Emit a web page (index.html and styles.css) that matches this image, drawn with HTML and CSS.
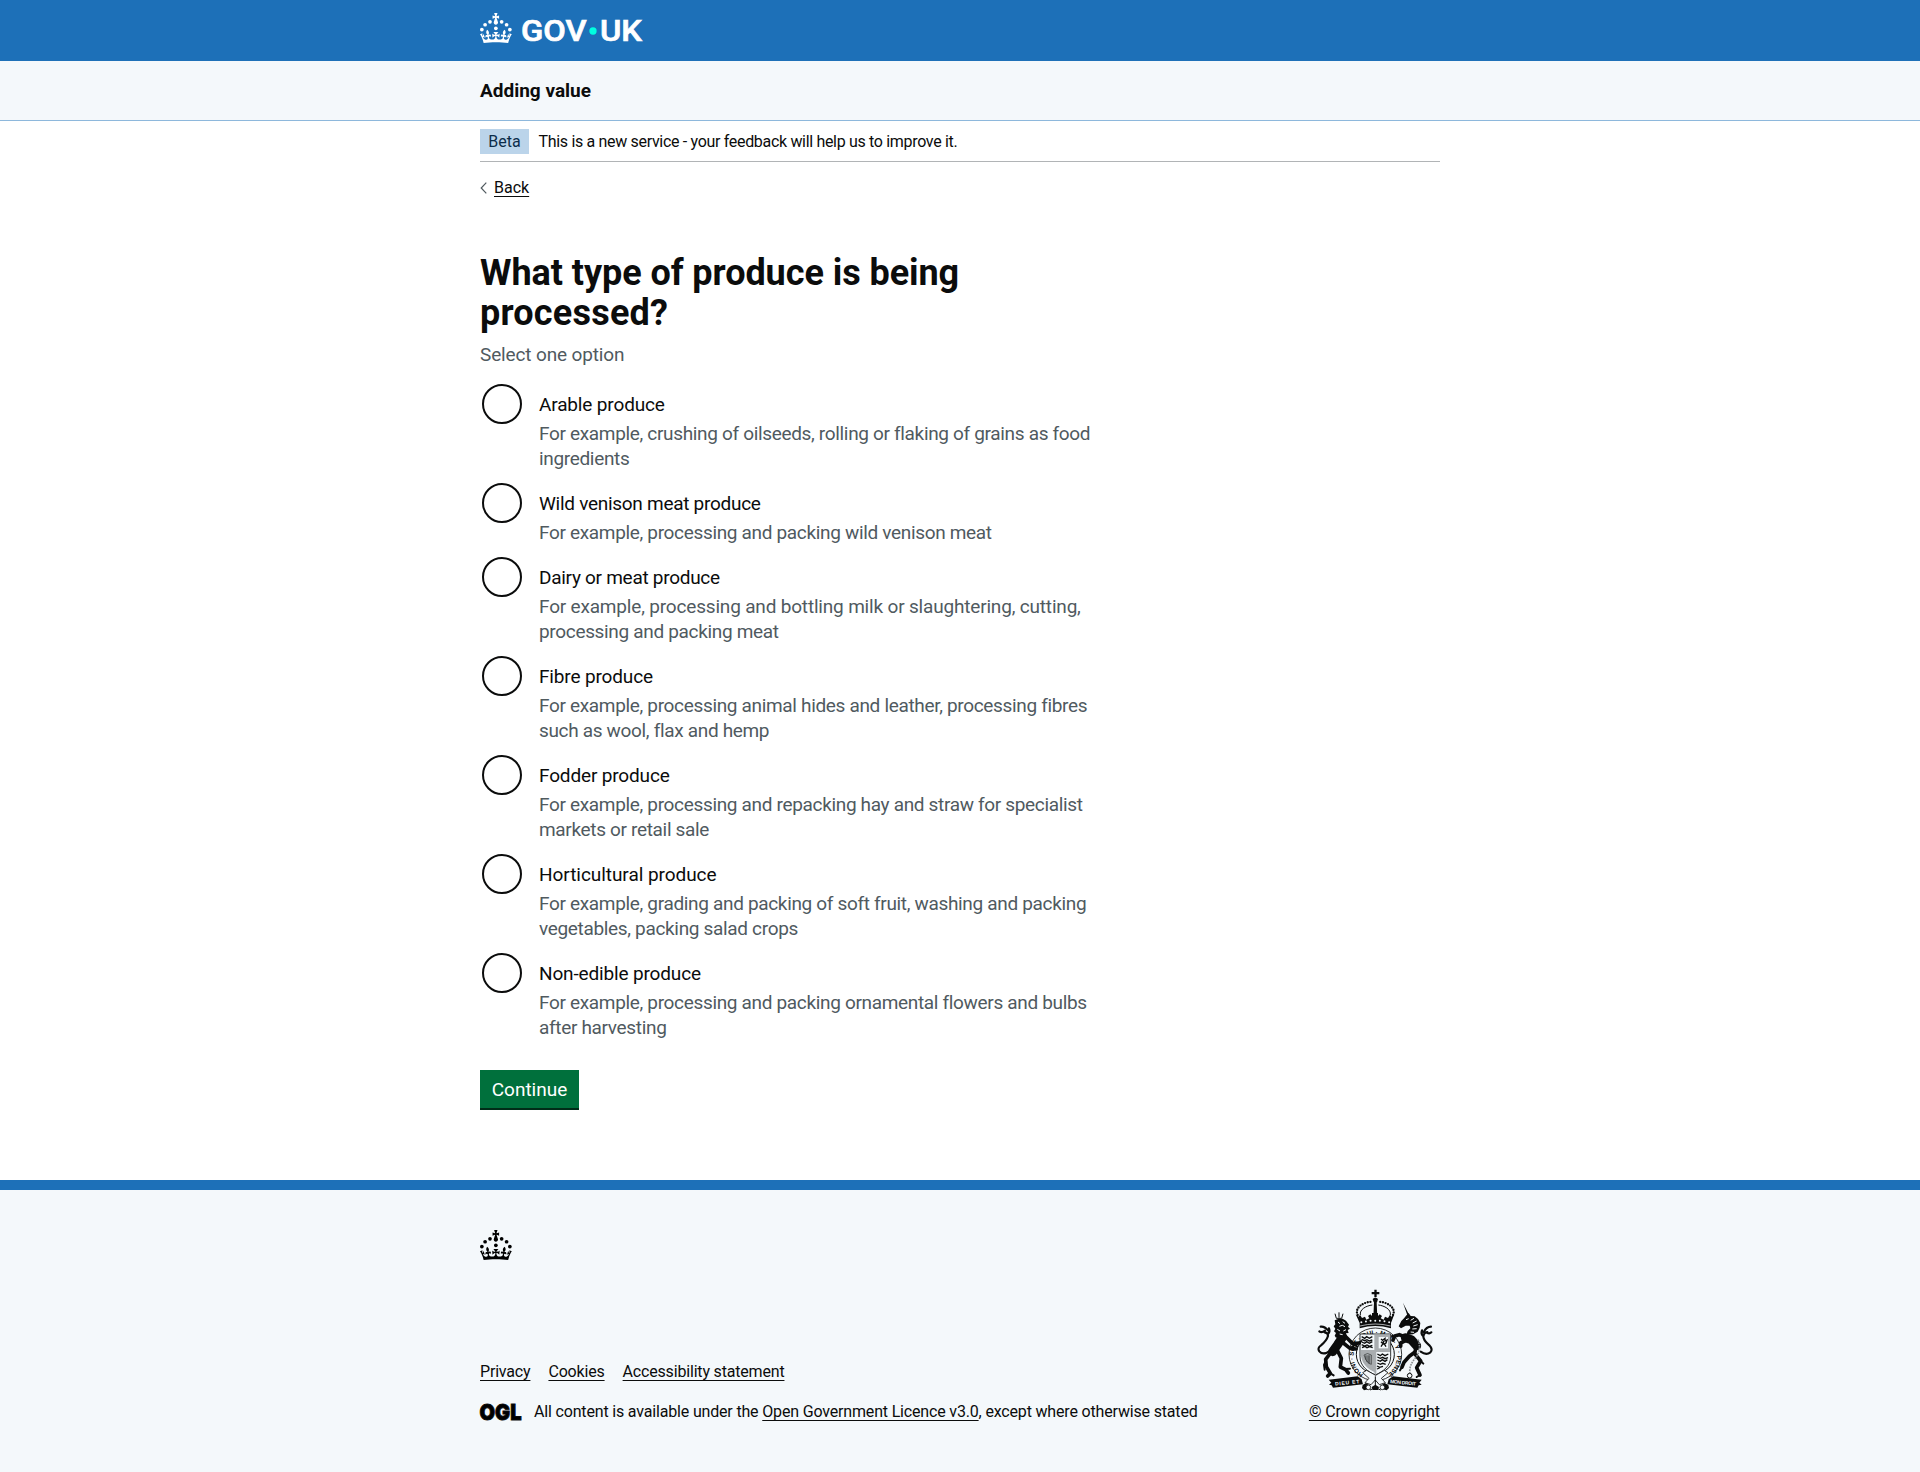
FILE: index.html
```html
<!DOCTYPE html>
<html lang="en">
<head>
<meta charset="utf-8">
<title>What type of produce is being processed?</title>
<link rel="stylesheet" href="styles.css">
</head>
<body>
<svg class="defs" width="0" height="0" aria-hidden="true">
  <symbol id="crown" viewBox="0 0 64 60">
    <circle cx="20" cy="17.6" r="3.7"/><circle cx="10.2" cy="23.5" r="3.7"/><circle cx="3.7" cy="33.2" r="3.7"/><circle cx="31.7" cy="30.6" r="3.7"/><circle cx="43.3" cy="17.6" r="3.7"/><circle cx="53.2" cy="23.5" r="3.7"/><circle cx="59.7" cy="33.2" r="3.7"/>
    <path d="M33.1,9.8c.2-.1.3-.3.5-.5l4.6,2.4v-6.8l-4.6,1.5c-.1-.2-.3-.3-.5-.5l1.9-5.9h-6.7l1.9,5.9c-.2.1-.3.3-.5.5l-4.6-1.5v6.8l4.6-2.4c.1.2.3.3.5.5l-2.6,8c-.9,2.8,1.2,5.7,4.1,5.7h0c3,0,5.1-2.9,4.1-5.7l-2.6-8ZM37,37.9s-3.4,3.8-4.1,6.1c2.2,0,4.2-.5,6.4-2.8l-.7,8.5c-2-2.8-4.4-4.1-5.7-3.8.1,3.1.5,6.7,5.8,7.2,3.7.3,6.7-1.5,7-3.8.4-2.6-2-4.3-3.7-1.6-1.4-4.5,2.4-6.1,4.9-3.2-1.9-4.5-1.8-7.7,2.4-10.9,3,4,2.6,7.3-1.2,11.1,2.4-1.3,6.2,0,4,4.6-1.2-2.8-3.7-2.2-4.2.2-.3,1.7.7,3.7,3,4.2,1.9.3,4.7-.9,7-5.9-1.3,0-2.4.7-3.9,1.7l2.4-8c.6,2.3,1.4,3.7,2.2,4.5.6-1.6.5-2.8,0-5.3l5,1.8c-2.6,3.6-5.2,8.7-7.3,17.5-7.4-1.1-15.7-1.7-24.5-1.7h0c-8.8,0-17.1.6-24.5,1.7-2.1-8.9-4.7-13.9-7.3-17.5l5-1.8c-.5,2.5-.6,3.7,0,5.3.8-.8,1.6-2.3,2.2-4.5l2.4,8c-1.5-1-2.6-1.7-3.9-1.7,2.3,5,5.2,6.2,7,5.9,2.3-.4,3.3-2.4,3-4.2-.5-2.4-3-3.1-4.2-.2-2.2-4.6,1.6-6,4-4.6-3.7-3.7-4.2-7.1-1.2-11.1,4.2,3.2,4.3,6.4,2.4,10.9,2.5-2.8,6.3-1.3,4.9,3.2-1.8-2.7-4.1-1-3.7,1.6.3,2.3,3.3,4.1,7,3.8,5.4-.5,5.7-4.2,5.8-7.2-1.3-.2-3.7,1-5.7,3.8l-.7-8.5c2.2,2.3,4.2,2.7,6.4,2.8-.7-2.3-4.1-6.1-4.1-6.1h10.6Z"/>
  </symbol>
</svg>

<header class="header">
  <div class="container">
    <svg class="header-logo" width="162" height="30" viewBox="0 0 324 60" role="img" aria-label="GOV.UK">
      <use href="#crown" width="64" height="60"/>
      <text class="wordmark" x="82" y="56.5" textLength="131" lengthAdjust="spacingAndGlyphs">GOV</text>
      <circle class="wordmark-dot" cx="226" cy="36" r="7.3"/>
      <text class="wordmark" x="240" y="56.5" textLength="84" lengthAdjust="spacingAndGlyphs">UK</text>
    </svg>
  </div>
</header>

<div class="service-nav">
  <div class="container"><span class="service-name">Adding value</span></div>
</div>

<div class="container">
  <div class="phase-banner">
    <strong class="tag">Beta</strong>
    <span class="phase-text">This is a new service - your feedback will help us to improve it.</span>
  </div>
  <a class="back-link" href="#"><svg width="7" height="12" viewBox="0 0 7 12"><path d="M6.3.7 1.2 6l5.1 5.3"/></svg><span class="link">Back</span></a>

  <main class="main">
    <h1>What type of produce is being<br><span class="h1-end">processed?</span></h1>
    <p class="hint">Select one option</p>
    <div class="radios">
      <label class="radio"><i class="dot"></i><span class="label">Arable produce</span><span class="desc">For example, crushing of oilseeds, rolling or flaking of grains as food<br>ingredients</span></label>
      <label class="radio"><i class="dot"></i><span class="label tight">Wild venison meat produce</span><span class="desc">For example, processing and packing wild venison meat</span></label>
      <label class="radio"><i class="dot"></i><span class="label tight">Dairy or meat produce</span><span class="desc"><span class="loose">For example, processing and bottling milk or slaughtering, cutting,</span><br>processing and packing meat</span></label>
      <label class="radio"><i class="dot"></i><span class="label">Fibre produce</span><span class="desc">For example, processing animal hides and leather, processing fibres<br>such as wool, flax and hemp</span></label>
      <label class="radio"><i class="dot"></i><span class="label">Fodder produce</span><span class="desc">For example, processing and repacking hay and straw for specialist<br>markets or retail sale</span></label>
      <label class="radio"><i class="dot"></i><span class="label wide">Horticultural produce</span><span class="desc">For example, grading and packing of soft fruit, washing and packing<br>vegetables, packing salad crops</span></label>
      <label class="radio"><i class="dot"></i><span class="label">Non-edible produce</span><span class="desc">For example, processing and packing ornamental flowers and bulbs<br>after harvesting</span></label>
    </div>
    <button class="button" type="button">Continue</button>
  </main>
</div>

<footer class="footer">
  <div class="container">
    <svg class="footer-crown" width="32" height="30" viewBox="0 0 64 60"><use href="#crown" width="64" height="60"/></svg>
    <div class="footer-row">
      <div class="footer-meta">
        <nav class="footer-links"><a class="link" href="#">Privacy</a><a class="link" href="#">Cookies</a><a class="link" href="#">Accessibility statement</a></nav>
        <div class="licence">
          <svg class="ogl" width="41" height="17" viewBox="0 0 41 17" role="img" aria-label="OGL"><text x="-.5" y="16.3" textLength="42" lengthAdjust="spacingAndGlyphs">OGL</text></svg>
          <span class="licence-text">All content is available under the <a class="link" href="#">Open Government Licence v3.0</a>, except where otherwise stated</span>
        </div>
      </div>
      <div class="copyright">
        <svg class="arms" width="118" height="104" viewBox="48 28 354 312" role="img" aria-label="Royal coat of arms">
          <!-- garter and shield -->
          <circle class="pale line" cx="226" cy="224" r="79"/>
          <circle class="line none" cx="226" cy="224" r="57"/>
          <path id="garter" class="hide" d="M190 284A65 65 0 1 1 262 284"/>
          <text class="motto"><textPath href="#garter" textLength="330">HONI · SOIT · QUI · MAL · Y · PENSE</textPath></text>
          <path class="pale line" d="M180 163h92v68c0 28-22 44-46 55-24-11-46-27-46-55z"/>
          <path class="grey" d="M228 165h42v47h-42zM182 216h42v62c-22-12-42-26-42-62zM223 165h6v118h-6zM182 211h88v6h-88z"/>
          <path class="pale" d="M236 172h28v34h-28z"/>
          <path class="stroke4" d="M185 171l9 5 6-5 8 5 9-5M185 179l9 4 7-3 7 4 9-3M185 187l9 4 6-5 8 5 9-5M185 195l9 4 7-3 7 4 9-3M186 204l9-4 6 4 8-3 9 3M232 223l9 5 6-5 8 5 10-5M232 232l9 4 7-3 7 4 9-3M232 241l9 4 6-5 8 5 7-5M232 250l9 4 7-3 9 3M231 259l8 4 10-3M231 268l8-3"/>
          <path class="stroke4" d="M243 178l5 4 7-6v8l6-3-3 9-5 3 5 8M243 186l6 6-6 9M250 184l1 11"/>
          <path class="harp" d="M192 226q10-9 22 0v28q-14-2-22-28zM197 227v13M201 227v20M205 227v24M209 227v25"/>
          <!-- royal crown -->
          <path d="M223 30h7v7h8v7h-8v8h-7v-8h-8v-7h8zM218 58q8-9 16 0l-3 10h-10zM222 68h8l2 46h-12z"/>
          <path class="pearls" d="M173 106C162 82 194 66 218 66M279 106C290 82 258 66 234 66"/>
          <path class="arch" d="M181 106C178 89 199 78 217 76M271 106C274 89 253 78 235 76"/>
          <path d="M167 104l9 7 4-6 6 10 9-4 4 9 9-4-4-7 7-5 5 5v-9h18v9l5-5 7 5-4 7 9 4 4-9 9 4 6-10 4 6 9-7-10 26 0 16q-48-14-94 0l0-16z"/>
          <path class="dots" d="M184 128q42-10 86 0"/>
          <path class="band" d="M180 139q46-12 92 0"/>
          <!-- lion -->
          <path class="crownlet" d="M105 102l4 14h16l4-14M117 98v16"/>
          <path d="M104 122l12-5 12 0 10 6 9 12-3 6 6 6-7 4 3 9-8 1 2 9-12 2-20 2-4-6 4-8-6-5 4-8-5-7 5-6z"/>
          <path class="body" d="M128 172l-16 24-14 20"/>
          <path class="leg" d="M96 214l-19 25 2 22 12 20-8 8M112 212l12 24-3 26 16 8 8 10M138 172l20 20 20-2M130 190l20 16 18 2"/>
          <path class="claws" d="M78 242l-6 14 2 14M91 281l10 6M134 268l16-1M160 192l12 9M176 190l8-6M150 206l12-8"/>
          <path class="cut" d="M114 127l6 5M128 126l7 5M118 140l9-3 8 4M112 149l8 5M130 154l8-4M119 163l9 2"/>
          <path class="tail" d="M92 212q-22 17-34 3-7-10 5-18 17-14 21-28 1-9-10-11M85 153q-12-14-23-12M75 153q-10 8-17 2M84 163q7-7 3-17"/>
          <!-- unicorn -->
          <path d="M309 69l19 38-5 3z"/>
          <path d="M318 108l8-8 6 9 12 1 10 8 7 12-2 14-6 12-14 8-20 2 4-12 8-8-2-8-12 0-14 8-7-6 8-16 8-8z"/>
          <path class="cut" d="M318 120l8-3M332 122l10-6M338 130l12-6M340 139l13-4M337 148l13-1M332 157l10 1"/>
          <path class="body" d="M316 174l18 6 16 18"/>
          <path class="leg" d="M348 202l-4 20 18 22-12 20 10 22M316 172l-18-7-14 4-5 12M318 182l-16 8 0 10M344 218l-16 12-16 18-6 14"/>
          <path class="claws" d="M360 286l-10 6M306 262l-6 10M362 244l8 8M284 169l-8 0"/>
          <path class="tail" d="M362 216q17 12 29 2 9-8-3-21-19-16-18-28 2-10 12-12M371 158q8-17 22-17M380 158q8 6 14 0M369 169q-7-7-3-17"/>
          <path class="chain" d="M354 180q12 31-8 55t-16 45"/>
          <circle class="stroke3" cx="329" cy="288" r="7"/>
          <!-- motto ribbon and compartment -->
          <path d="M86 300l87-10 12 9 4 15-90 10-4-7-8-2 7-6zM365 300l-86-10-13 9-4 15 90 10 4-7 9-2-7-6z"/>
          <text class="ribbon-text" x="105" y="314" textLength="73" transform="rotate(-6 142 309)">DIEU ET</text>
          <text class="ribbon-text" x="270" y="314" textLength="78" transform="rotate(6 310 309)">MON DROIT</text>
          <path class="pale line" d="M188 279l12-7 27 15 26-15 11 7-20 17 12 13-18 6-12-14-13 14-18-6 12-13z"/>
          <path d="M188 316l10-6 9 7-3 12-12 3-6-7zM265 316l-11-6-9 7 3 12 12 3 7-7zM215 322l11-7 11 7-3 9h-16z"/>
          <circle class="pale line" cx="205" cy="323" r="7"/><circle class="pale line" cx="247" cy="323" r="7"/>
          <path class="stroke3" d="M226 290v26M210 331l16-7 16 7"/>
        </svg>
        <a class="link" href="#">© Crown copyright</a>
      </div>
    </div>
  </div>
</footer>
</body>
</html>
```

FILE: styles.css
```css
* { box-sizing: border-box; }
body { margin: 0; background: #fff; color: #0b0c0c; font-family: Roboto, "Liberation Sans", sans-serif; font-size: 19px; line-height: 25px; }
.defs { display: block; }
.container { width: 960px; margin: 0 auto; }
.header { height: 61px; background: #1d70b8; color: #fff; padding-top: 13px; }
.header-logo { display: block; fill: currentColor; overflow: visible; }
.wordmark { font: 500 60px Roboto, sans-serif; stroke: #fff; stroke-width: 1.4; }
.wordmark-dot { fill: #00ffe0; }
.service-nav { height: 60px; background: #f4f8fb; border-bottom: 1px solid #8eb8dc; padding-top: 17px; }
.service-name { font-weight: 700; }
.link { color: inherit; text-decoration: underline; text-decoration-thickness: 1px; text-underline-offset: 3px; }
.phase-banner { display: flex; align-items: center; gap: 9.5px; height: 41px; border-bottom: 1px solid #b1b4b6; font-size: 16px; line-height: 20px; }
.phase-text { padding-top: 2px; letter-spacing: -.32px; }
.tag { background: #bbd4ea; color: #0c2d4a; font-weight: 400; width: 49px; height: 25px; line-height: 25px; text-align: center; }
.back-link { display: flex; align-items: center; gap: 7px; margin-top: 16px; height: 20px; font-size: 16px; line-height: 20px; color: inherit; text-decoration: none; }
.back-link svg { fill: none; stroke: #505a5f; stroke-width: 1.2; }
.main { padding-top: 55px; height: 982px; }
h1 { margin: 0; font-size: 36px; line-height: 40px; font-weight: 700; letter-spacing: -.06px; }
.h1-end { letter-spacing: .22px; }
.hint { margin: 9px 0 17px; color: #505a5f; letter-spacing: -.14px; }
.radios { display: flex; flex-direction: column; gap: 12px; }
.radio { display: grid; grid-template-columns: 59px 1fr; }
.dot { width: 40px; height: 40px; margin: 0 0 0 2px; border: 2px solid #0b0c0c; border-radius: 50%; grid-row: 1 / span 2; }
.label { padding-top: 8px; line-height: 25px; letter-spacing: -.15px; }
.label.tight { letter-spacing: -.28px; }
.label.wide { letter-spacing: -.05px; }
.desc { padding-top: 4px; color: #505a5f; letter-spacing: -.33px; }
.loose { letter-spacing: -.18px; }
.button { display: block; margin-top: 30px; width: 99px; height: 38px; border: 0; padding: 1px 0 0; background: #00703c; color: #fff; box-shadow: 0 2px 0 #002d18; font: inherit; line-height: 37px; }
.footer { height: 292px; background: #f4f8fb; border-top: 10px solid #1d70b8; padding-top: 40px; font-size: 16px; line-height: 20px; letter-spacing: -.18px; }
.footer-crown { display: block; }
.footer-row { display: flex; justify-content: space-between; align-items: flex-end; height: 162px; }
.footer-links { display: flex; gap: 18px; margin-bottom: 20px; }
.licence { display: flex; align-items: center; gap: 13px; }
.licence-text { letter-spacing: -.17px; }
.ogl { overflow: visible; letter-spacing: 0; }
.ogl text { font: 900 22px Inter, sans-serif; stroke: #0b0c0c; stroke-width: .9; }
.copyright { display: flex; flex-direction: column; align-items: center; gap: 9px; letter-spacing: -.08px; }

/* Royal coat of arms */
.arms { display: block; fill: #0b0c0c; letter-spacing: 0; margin-left: 2px; }
.pale { fill: #f4f8fb; }
.grey { fill: #a9adb0; }
.line { stroke: #0b0c0c; stroke-width: 2.5; }
.none, .hide, .stroke3, .stroke4, .harp, .pearls, .arch, .band, .dots, .cut, .tail, .chain, .body, .leg, .claws, .crownlet { fill: none; stroke: #0b0c0c; stroke-width: 3; }
.hide { stroke: none; }
.stroke4 { stroke-width: 4; }
.harp { stroke-width: 1.5; }
.pearls { stroke-width: 7; stroke-linecap: round; stroke-dasharray: 0 8; }
.dots { stroke: #f4f8fb; stroke-width: 6; stroke-linecap: round; stroke-dasharray: 0 14; }
.band { stroke: #f4f8fb; stroke-width: 2; }
.cut { stroke: #f4f8fb; stroke-width: 3; }
.tail { stroke-width: 6.5; stroke-linecap: round; }
.body { stroke-width: 27; stroke-linecap: round; stroke-linejoin: round; }
.leg { stroke-width: 11; stroke-linecap: round; stroke-linejoin: round; }
.claws { stroke-width: 6; stroke-linecap: round; }
.chain { stroke: #8a8f92; stroke-width: 5; stroke-dasharray: 5 3; }
.motto { font: 700 19px "Liberation Sans", sans-serif; }
.ribbon-text { font: 700 15px "Liberation Sans", sans-serif; fill: #f4f8fb; }
```
